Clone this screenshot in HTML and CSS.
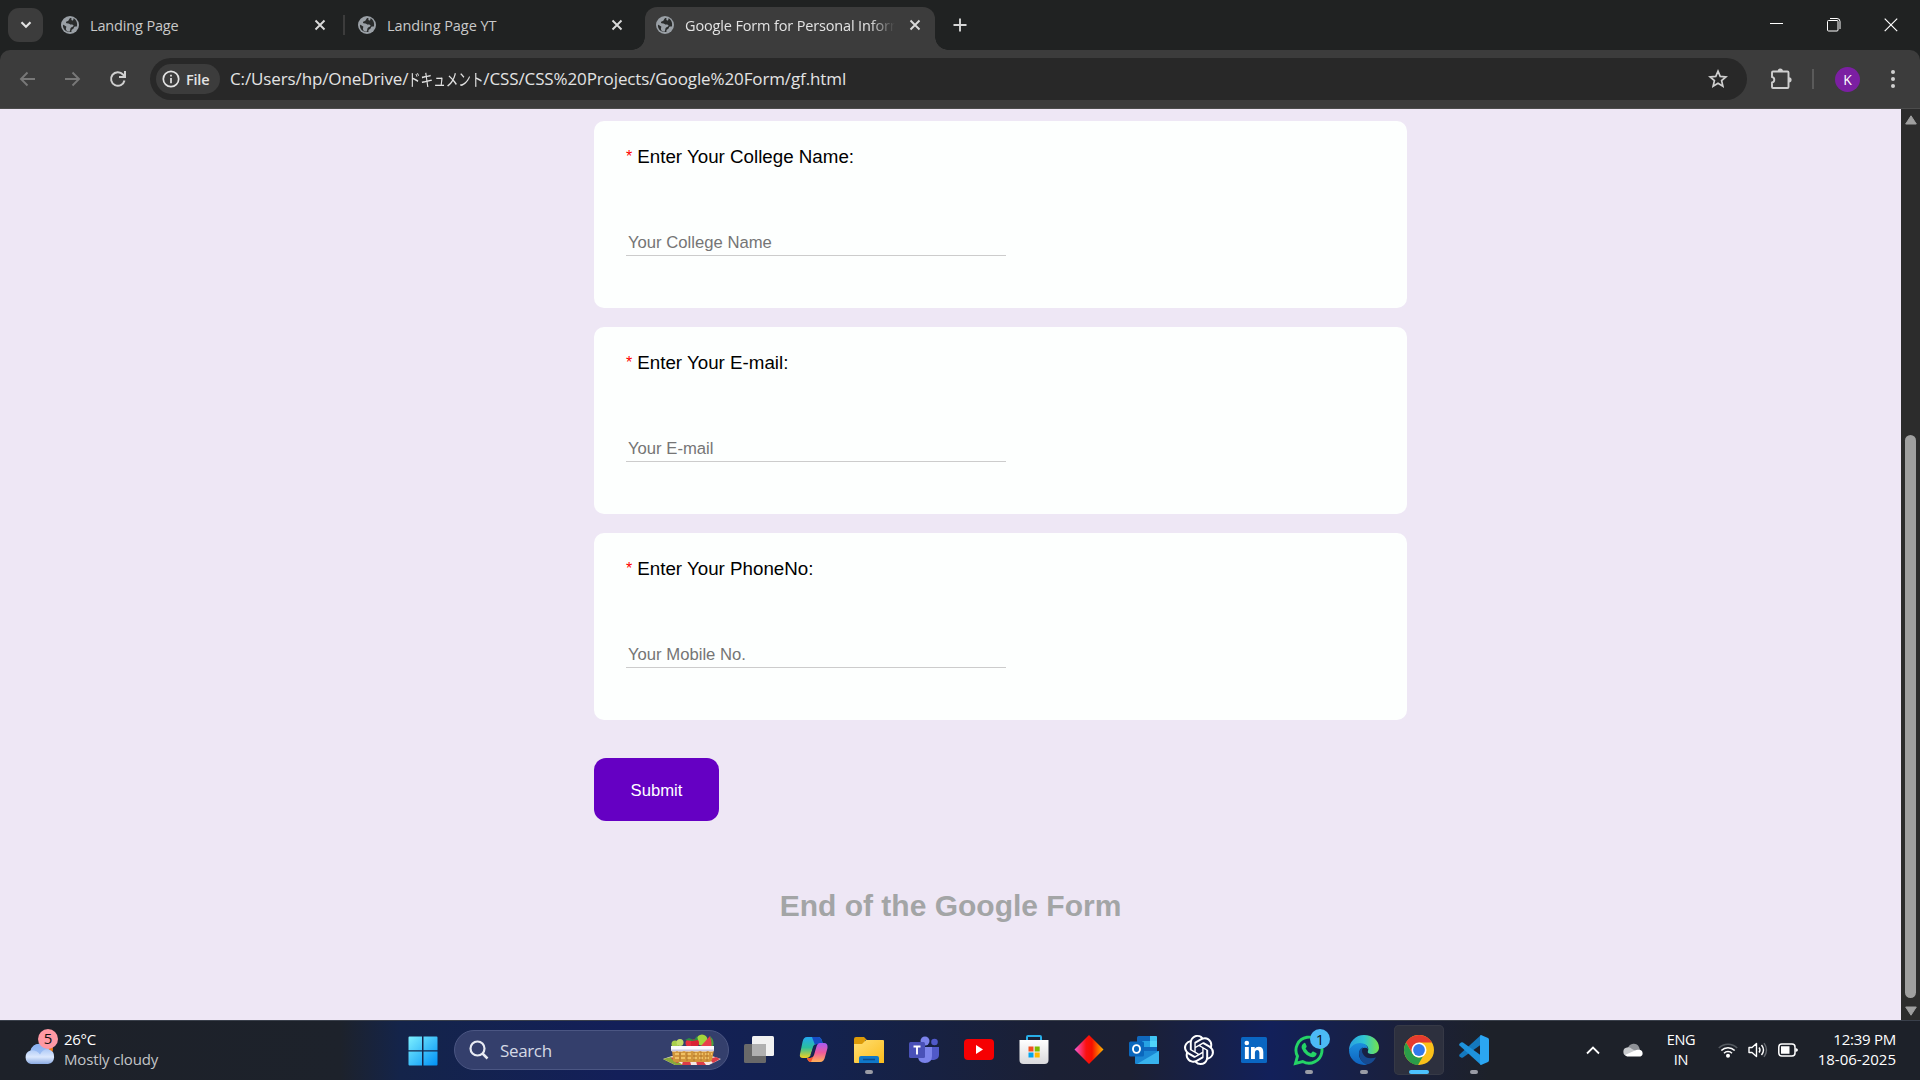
FILE: index.html
```html
<!DOCTYPE html>
<html lang="en">
<head>
<meta charset="utf-8">
<title>Google Form for Personal Information</title>
<link rel="stylesheet" href="styles.css">
</head>
<body>
<svg width="0" height="0" class="defs">
  <defs>
    <symbol id="globe" viewBox="0 0 18 18"><circle cx="9" cy="9" r="9" fill="#9aa0a6"/><path d="M10.500 2C7.500 2 8.700 4 7 5c-1 .6-2.200.4-2 1.700.3 1.200 3.200.5 4 1.500 1 .9 3.600-.2 3.500 1.600-.1 1.500-2.500 1.200-3 2.400-.4 1.100-.2 3-1.200 3.500C4.500 15.500 4.600 12.500 5.300 11.300 5.900 10 3.200 9.800 2 8.500c-.6 4.300 2.600 7.600 7 7.600.8 0 1-.1 1.600-.3-.6-1.400.3-2.200 1.300-2.700 1.300-.6.7-2 1.900-2.500.8-.3 1.600.1 2.200-.4C16.600 6.500 15 3.600 12.500 2.300c0 1.500-.3 2.400-1.200 2.300-.9-.1-1.200-1.500-.8-2.600z" fill="#2a2c2c"/></symbol>
    <symbol id="x" viewBox="0 0 12 12"><path d="M1.500 1.500l9 9M10.500 1.500l-9 9" stroke="currentColor" stroke-width="1.900" fill="none"/></symbol>
    <linearGradient id="win" x1="0" y1="0" x2="1" y2="1"><stop offset="0" stop-color="#7df0ff"/><stop offset="1" stop-color="#0090f5"/></linearGradient>
    <linearGradient id="cloud" x1="0" y1="0" x2="0" y2="1"><stop offset="0" stop-color="#8db4f2"/><stop offset=".65" stop-color="#dce8fd"/><stop offset="1" stop-color="#8aaae2"/></linearGradient>
    <linearGradient id="copA" x1="0" y1="0" x2="0" y2="1"><stop offset="0" stop-color="#24a7f2"/><stop offset=".5" stop-color="#2bbf9d"/><stop offset="1" stop-color="#f3d021"/></linearGradient>
    <linearGradient id="copB" x1="0" y1="0" x2="0" y2="1"><stop offset="0" stop-color="#a75bf5"/><stop offset=".5" stop-color="#ee5a9c"/><stop offset="1" stop-color="#ffb257"/></linearGradient>
    <linearGradient id="fold" x1="0" y1="0" x2="1" y2="1"><stop offset="0" stop-color="#ffdf73"/><stop offset="1" stop-color="#fcbc1c"/></linearGradient>
    <linearGradient id="kite" x1="0" y1="0" x2="1" y2="0"><stop offset="0" stop-color="#f45bd8"/><stop offset=".4" stop-color="#fb1111"/><stop offset=".6" stop-color="#f51000"/><stop offset="1" stop-color="#ffb400"/></linearGradient>
    <linearGradient id="bag" x1="0" y1="0" x2="0" y2="1"><stop offset="0" stop-color="#fff"/><stop offset="1" stop-color="#d9d9dc"/></linearGradient>
    <linearGradient id="edgeA" x1="0" y1="0" x2="1" y2="0"><stop offset="0" stop-color="#2a9fe0"/><stop offset=".5" stop-color="#2fc5d4"/><stop offset="1" stop-color="#75e44a"/></linearGradient>
    <linearGradient id="edgeB" x1="0" y1="0" x2="0" y2="1"><stop offset="0" stop-color="#1b8fdf"/><stop offset="1" stop-color="#0f62bd"/></linearGradient>
  </defs>
</svg>

<header class="tabstrip">
  <div class="tab-search"><svg width="12" height="8" viewBox="0 0 12 8"><path d="M1.500 1.200L6 5.800l4.500-4.600" fill="none" stroke="#e3e3e3" stroke-width="2.100"/></svg></div>
  <div class="tab first"><svg class="globe"><use href="#globe"/></svg><span class="title">Landing Page</span><svg class="x"><use href="#x"/></svg></div>
  <i class="divider"></i>
  <div class="tab second"><svg class="globe"><use href="#globe"/></svg><span class="title yt">Landing Page YT</span><svg class="x"><use href="#x"/></svg></div>
  <div class="tab active"><svg class="globe"><use href="#globe"/></svg><span class="title fade">Google Form for Personal Information</span><svg class="x"><use href="#x"/></svg></div>
  <svg class="plus" width="14" height="14" viewBox="0 0 14 14"><path d="M7 .5v13M.5 7h13" stroke="#d5d5d5" stroke-width="1.900"/></svg>
  <div class="winctl">
    <svg width="14" height="14" viewBox="0 0 14 14"><path d="M0 5.500h13" stroke="#fff"/></svg>
    <svg width="14" height="14" viewBox="0 0 14 14" fill="none" stroke="#fff"><path d="M3 .5h7a3 3 0 0 1 3 3V11"/><rect x=".5" y="2.500" width="10.500" height="10.500" rx="1"/></svg>
    <svg width="14" height="14" viewBox="0 0 14 14"><path d="M.7.7l12.500 12.500M13.200.7L.7 13.200" stroke="#fff" stroke-width="1.200"/></svg>
  </div>
</header>

<div class="toolbar">
  <svg class="nav back" width="18" height="16" viewBox="0 0 18 16"><path d="M16 8H2.500M8.500 1.500L2 8l6.500 6.500" fill="none" stroke="#787878" stroke-width="1.900"/></svg>
  <svg class="nav fwd" width="18" height="16" viewBox="0 0 18 16"><path d="M1 8h13.500M8.500 1.500L15 8l-6.500 6.500" fill="none" stroke="#787878" stroke-width="1.900"/></svg>
  <svg class="nav" width="18" height="18" viewBox="0 0 18 18"><path d="M15.500 10.500A6.800 6.800 0 1 1 14 4.500L16 6.500" fill="none" stroke="#d0d0d0" stroke-width="2"/><path d="M16 1v6h-6" fill="none" stroke="#d0d0d0" stroke-width="2"/></svg>
  <div class="omnibox">
    <div class="chip"><svg width="18" height="18" viewBox="0 0 18 18"><circle cx="9" cy="9" r="7.700" fill="none" stroke="#e3e3e3" stroke-width="1.700"/><path d="M9 8v5.200M9 4.700v1.900" stroke="#e3e3e3" stroke-width="1.700"/></svg><span>File</span></div>
    <span class="url">C:/Users/hp/OneDrive/<span class="jp">ドキュメント</span>/CSS/CSS%20Projects/Google%20Form/gf.html</span>
    <svg class="star" width="20" height="20" viewBox="0 0 20 20"><path d="M10 2.200l2.200 5.200 5.700.5-4.300 3.700 1.300 5.600L10 14.200l-4.900 3 1.300-5.600L2.100 7.900l5.700-.5z" fill="none" stroke="#cfcfcf" stroke-width="1.700"/></svg>
  </div>
  <svg class="puzzle" width="22" height="22" viewBox="0 0 22 22"><path d="M2 4.500Q2 3.500 3 3.500h14.500q1 0 1 1V19q0 1-1 1H3q-1 0-1-1v-4.500a2.800 2.800 0 0 0 0-5.500z" fill="none" stroke="#cfcfcf" stroke-width="1.900" stroke-linejoin="round"/><path d="M7.700 3a2.600 2.600 0 0 1 5.200 0zM19 9.200a2.600 2.600 0 0 1 0 5.200z" fill="#cfcfcf"/></svg>
  <i class="bar"></i>
  <span class="avatar">K</span>
  <svg class="dots" width="6" height="20" viewBox="0 0 6 20" fill="#d0d0d0"><circle cx="3" cy="3" r="2"/><circle cx="3" cy="10" r="2"/><circle cx="3" cy="17" r="2"/></svg>
</div>

<div class="viewport">
  <main>
    <form class="cards">
      <section class="card"><label><b>*</b>Enter Your College Name:</label><input type="text" placeholder="Your College Name"></section>
      <section class="card"><label><b>*</b>Enter Your E-mail:</label><input type="text" placeholder="Your E-mail"></section>
      <section class="card"><label><b>*</b>Enter Your PhoneNo:</label><input type="text" placeholder="Your Mobile No."></section>
      <button type="button" class="submit">Submit</button>
    </form>
    <h1>End of the Google Form</h1>
  </main>
  <div class="scroll">
    <svg width="12" height="10" viewBox="0 0 12 10"><path d="M6 .8L11.300 9H.7z" fill="#9f9f9f" stroke="#9f9f9f" stroke-linejoin="round"/></svg>
    <i class="thumb"></i>
    <svg width="12" height="10" viewBox="0 0 12 10"><path d="M6 9.200L11.300 1H.7z" fill="#9f9f9f" stroke="#9f9f9f" stroke-linejoin="round"/></svg>
  </div>
</div>

<footer class="taskbar">
  <div class="weather">
    <svg width="36" height="38" viewBox="0 0 36 38"><circle cx="22" cy="20" r="7" fill="#f47a12"/><path d="M7 35a7 7 0 0 1-.5-13.500A10 10 0 0 1 25 20.500 7.500 7.500 0 0 1 24 35z" fill="url(#cloud)"/><path d="M6.500 21.500A10 10 0 0 1 25 20.500q-6-1-9 5-4-5-9.500-4z" fill="#86adf0" opacity=".65"/><circle cx="24" cy="10" r="10" fill="#ff99a4"/><text x="24" y="15" text-anchor="middle" class="badge">5</text></svg>
    <div class="wtext"><span class="temp">26°C</span><span class="sky">Mostly cloudy</span></div>
  </div>
  <svg class="start" width="30" height="30" viewBox="0 0 30 30"><path d="M1.500.5H14v13.700H.5V1.500q0-1 1-1zM15.500.5h13q1 0 1 1v12.700h-14zM.5 15.500H14v14H1.500q-1 0-1-1zM15.500 15.500h14v13q0 1-1 1h-13z" fill="url(#win)"/></svg>
  <div class="search">
    <svg width="20" height="20" viewBox="0 0 20 20"><circle cx="8.500" cy="8.500" r="7" fill="none" stroke="#e8ebf3" stroke-width="2.200"/><path d="M13.500 13.500l5 5" stroke="#e8ebf3" stroke-width="2.500"/></svg>
    <span>Search</span>
    <svg class="basket" width="58" height="32" viewBox="0 0 58 32">
      <path d="M0 25l9-3h40l9 3-12 6H12z" fill="#f6e8e4"/><path d="M0 25l8-2 12 8h-8z" fill="#8aa83a"/><path d="M8 24l6-2 5 4-5 3zM20 27h7l1 4h-9zM33 27h7l3 4h-9zM46 25l7-2 4 2-7 4z" fill="#dc3c48"/>
      <circle cx="12" cy="10" r="3.500" fill="#a9cf4d"/><circle cx="17" cy="8.500" r="3.500" fill="#c2dd6a"/><circle cx="39" cy="6" r="5.500" fill="#a4d63c"/><path d="M38 12L47 2l3 10z" fill="#e8404c"/><path d="M47 2q5 5 3 10h-1.500q.5-5-1.500-10z" fill="#4ca53c"/><circle cx="26" cy="9" r="3.500" fill="#e62f3f"/><circle cx="32" cy="9" r="4" fill="#d92336"/><path d="M22 6l4-2 5 2 3-4 1 4-6 1z" fill="#2f8c45"/>
      <path d="M9 16h42l-2 10q-1 2-3 2H13q-3 0-3-2z" fill="#d1953c"/><path d="M12 20h37M12 24h36" stroke="#f0c164" stroke-width="1.800" stroke-dasharray="4 2"/><path d="M17 17v10M24 17v10M31 17v10M38 17v10M44 17v10" stroke="#a8702c" stroke-width=".8"/><path d="M8 12h43v5q-3 1-6 0-4 1-8 0-4 1-8 0-4 1-8 0-4 1-7 0-3 1-6 0z" fill="#fafaff"/><path d="M8 15.500h43v1.500H8z" fill="#c9c8e3"/>
    </svg>
  </div>
  <div class="apps">
    <div class="app"><svg width="32" height="32" viewBox="0 0 32 32"><rect x="1" y="10" width="22" height="19" rx="1.500" fill="#696969"/><rect x="9" y="2" width="22" height="20" rx="1.500" fill="#f1f1f1"/><path d="M9 10h14v12H9z" fill="#b0b0b0"/></svg></div>
    <div class="app"><svg width="32" height="32" viewBox="0 0 32 32"><path d="M9 3h11q3 0 4 4l1 3h-6q-3 0-4 3l-2 7q-1 4-5 4H5q-4 0-3-4L4.500 8q1-5 4.500-5z" fill="url(#copA)"/><path d="M14 3h6q3 0 4 4l1 3h-6q-1 0-2 1z" fill="#164cc4"/><path d="M22 28H13q-3 0-4-4h3q3 0 4-3l2.500-8.500Q19.500 9 22 9h4q4 0 3.500 5L27 23q-1 5-5 5z" fill="url(#copB)"/><path d="M9 24h3q3 0 4-3l-3 7q-3 0-4-4z" fill="#f5542e"/><path d="M18 11.500L14.500 21h-2l3.500-9.500z" fill="#182656"/></svg></div>
    <div class="app run"><svg width="32" height="32" viewBox="0 0 32 32"><path d="M1 5q0-2 2-2h8l3 3h-2v5H1z" fill="#dc9a08"/><path d="M1 10h8l4-4h17q1 0 1 1v22H2q-1 0-1-1z" fill="url(#fold)"/><path d="M6 29v-5q0-2 2-2h16q2 0 2 2v5z" fill="#0f78c9"/><path d="M10 25.500h12" stroke="#0b4b8d" stroke-width="1.500"/></svg></div>
    <div class="app"><svg width="32" height="32" viewBox="0 0 32 32"><circle cx="26.500" cy="8" r="3.300" fill="#5059c9"/><path d="M22 13h9v8q0 4-5 5h-4z" fill="#5059c9"/><circle cx="17" cy="7" r="4.500" fill="#7b83eb"/><path d="M10 13h14v9q0 7-7 7t-7-7z" fill="#7b83eb"/><rect x="1" y="8" width="16" height="16" rx="1.500" fill="#4951b8"/><path d="M5.500 12.500h7M9 12.500v8" stroke="#fff" stroke-width="1.900"/></svg></div>
    <div class="app"><svg width="32" height="32" viewBox="0 0 32 32"><rect x="1" y="5" width="30" height="21" rx="4" fill="#f60002"/><path d="M13 11l7 4.500-7 4.500z" fill="#fff"/></svg></div>
    <div class="app"><svg width="32" height="32" viewBox="0 0 32 32"><path d="M9 8V3q0-1 1-1h12q1 0 1 1v5" fill="none" stroke="#28aee8" stroke-width="2"/><path d="M1.500 6h29v20q0 4-4 4h-21q-4 0-4-4z" fill="url(#bag)"/><path d="M10.500 12.500h5v5h-5z" fill="#f25022"/><path d="M16.700 12.500h5v5h-5z" fill="#7fba00"/><path d="M10.500 18.500h5v5h-5z" fill="#00a4ef"/><path d="M16.700 18.500h5v5h-5z" fill="#ffb900"/></svg></div>
    <div class="app"><svg width="32" height="32" viewBox="0 0 32 32"><path d="M16 1L30.500 15.500 16 30 1.500 15.500z" fill="url(#kite)"/></svg></div>
    <div class="app"><svg width="32" height="32" viewBox="0 0 32 32"><rect x="9" y="2" width="20" height="16" rx="1.500" fill="#1068bd"/><path d="M14 7h8v6h-8z" fill="#27a3e4"/><path d="M22 2h6q1 0 1 1v4h-7z" fill="#41c5f4"/><path d="M22 7h7v6h-7z" fill="#4fd5fb"/><path d="M7 17h24v12q0 1-1 1H8q-1 0-1-1z" fill="#1a86d3"/><path d="M31 17v12q0 1-1 1H9z" fill="#38b3ee"/><rect x="1" y="7.500" width="15" height="15" rx="1.500" fill="#0a67bd"/><ellipse cx="8.500" cy="15" rx="3.500" ry="3.900" fill="none" stroke="#fff" stroke-width="1.900"/></svg></div>
    <div class="app"><svg width="32" height="32" viewBox="0 0 24 24"><path fill="#fff" transform="translate(.7 .7) scale(.94)" d="M22.282 9.821a5.985 5.985 0 0 0-.516-4.910 6.046 6.046 0 0 0-6.510-2.900A6.065 6.065 0 0 0 4.981 4.182a5.985 5.985 0 0 0-3.998 2.900 6.046 6.046 0 0 0 .743 7.097 5.980 5.980 0 0 0 .510 4.911 6.051 6.051 0 0 0 6.515 2.900A5.985 5.985 0 0 0 13.260 24a6.056 6.056 0 0 0 5.772-4.206 5.990 5.990 0 0 0 3.998-2.900 6.056 6.056 0 0 0-.748-7.073zM13.260 22.430a4.476 4.476 0 0 1-2.876-1.040l.141-.081 4.779-2.758a.795.795 0 0 0 .393-.681v-6.737l2.020 1.168a.071.071 0 0 1 .038.052v5.583a4.504 4.504 0 0 1-4.495 4.494zM3.600 18.304a4.470 4.470 0 0 1-.535-3.014l.142.085 4.783 2.759a.771.771 0 0 0 .780 0l5.843-3.369v2.332a.080.080 0 0 1-.033.062L9.740 19.950a4.500 4.500 0 0 1-6.140-1.646zM2.340 7.896a4.485 4.485 0 0 1 2.366-1.973V11.600a.766.766 0 0 0 .388.677l5.815 3.354-2.020 1.169a.076.076 0 0 1-.071 0l-4.830-2.787A4.504 4.504 0 0 1 2.340 7.872zm16.597 3.855l-5.833-3.387L15.119 7.200a.076.076 0 0 1 .071 0l4.830 2.791a4.494 4.494 0 0 1-.676 8.105v-5.678a.790.790 0 0 0-.407-.667zm2.010-3.023l-.141-.085-4.774-2.782a.776.776 0 0 0-.785 0L9.409 9.230V6.897a.066.066 0 0 1 .028-.061l4.830-2.787a4.500 4.500 0 0 1 6.680 4.660zm-12.640 4.135l-2.020-1.164a.080.080 0 0 1-.038-.057V6.075a4.500 4.500 0 0 1 7.375-3.453l-.142.080L8.704 5.460a.795.795 0 0 0-.393.681zm1.097-2.365l2.602-1.500 2.607 1.500v2.999l-2.597 1.500-2.607-1.500z"/></svg></div>
    <div class="app"><svg width="32" height="32" viewBox="0 0 32 32"><rect x="3" y="3" width="26" height="26" rx="1.500" fill="#0a66c2"/><circle cx="8.800" cy="9" r="2.300" fill="#fff"/><path d="M6.900 13h3.900v12H6.900zM13 13h3.700v1.700q1.200-2 4-2 4.600 0 4.600 5.300v7h-3.900v-6.300q0-2.700-2-2.700-2.500 0-2.500 3v6H13z" fill="#fff"/></svg></div>
    <div class="app run wa"><svg width="32" height="32" viewBox="0 0 32 32"><path d="M2.500 29.500l2-7.300A13 13 0 1 1 9.700 27.500z" fill="none" stroke="#25d366" stroke-width="2.900"/><path d="M11.200 9q.8-.5 1.300.5l1.100 2.600q.3.600-.2 1.200l-.9 1.100q2 3.700 5.500 5l1.300-1.600q.4-.5 1-.2l2.900 1.400q.6.300.4 1-.7 3-4 3.200-2 0-5.800-2.300-4-3-5.100-6.600Q8 11 11.200 9z" fill="#25d366"/></svg><span class="count">1</span></div>
    <div class="app run"><svg width="32" height="32" viewBox="0 0 32 32"><path d="M1 16A15 15 0 0 1 16 1c9 0 15 6 15 12.500 0 4-3.200 6.500-7 6.500-3 0-5-1.200-4-3 1.500-4-2-7-6-7-6 0-10 3-13 6z" fill="url(#edgeA)"/><path d="M1 16q4-7 11-7 7 0 8 6-2-2-5-1-5 2-4 8 2 6 8 8.500Q17 31 16 31A15 15 0 0 1 1 16z" fill="url(#edgeB)"/><path d="M11 19q0-4 4-6-2 4 0 7 3 6 13 3.500-4 7-10 7-7-4-7-11.500z" fill="#164a91"/></svg></div>
    <div class="app run on"><svg width="32" height="32" viewBox="0 0 32 32"><circle cx="16" cy="16" r="15" fill="#fbc11a"/><path d="M3 8.500A15 15 0 0 1 29 8.500H16L9.500 19.700z" fill="#e63b2e"/><path d="M3 8.500l6.500 11.200A7.500 7.500 0 0 0 20 22.300L15 31A15 15 0 0 1 3 8.500z" fill="#2b9d49"/><circle cx="16" cy="16" r="7.500" fill="#fff"/><circle cx="16" cy="16" r="5.900" fill="#3279ea"/></svg></div>
    <div class="app run"><svg width="32" height="32" viewBox="0 0 32 32"><path d="M1.500 20.500L23 1l1.500 8.500L5 23.500q-1 .7-2 0L1.500 22.200q-.8-.8 0-1.700z" fill="#1478bd"/><path d="M1.500 11.500L23 31l1.500-8.500L5 8.500q-1-.7-2 0L1.500 9.800q-.8.8 0 1.700z" fill="#1e93dd"/><path d="M23 1l7 3q1 .5 1 2v20q0 1.500-1 2l-7 3q-1 0-1-2V3q0-2 1-2z" fill="#2ba6f2"/></svg></div>
  </div>
  <div class="tray">
    <svg class="chev" width="14" height="9" viewBox="0 0 14 9"><path d="M1 7.500l6-6 6 6" fill="none" stroke="#fff" stroke-width="1.800"/></svg>
    <svg class="one" width="21" height="14" viewBox="0 0 21 14"><path d="M5 5a6 6 0 0 1 11-1l1 3-8 3z" fill="#8e9196"/><path d="M4 13A4.300 4.300 0 0 1 4 4.500q3-.7 5 1.500l10 5-4 2z" fill="#c8cacd"/><path d="M2 12l10-4.500a5 5 0 0 1 4-.7 3.500 3.500 0 0 1 1.500 6.700H4z" fill="#fff"/></svg>
    <div class="lang"><span>ENG</span><span>IN</span></div>
    <svg class="wifi" width="20" height="16" viewBox="0 0 20 16" fill="none" stroke="#fff" stroke-width="1.600"><path d="M.8 6a13 13 0 0 1 18.400 0" stroke="#555a60"/><path d="M3.300 8.500a9.500 9.500 0 0 1 13.400 0M6 11.200a5.700 5.700 0 0 1 8 0"/><circle cx="10" cy="13.700" r="1.200" fill="#fff"/></svg>
    <svg class="vol" width="20" height="16" viewBox="0 0 20 16" fill="none" stroke="#fff" stroke-width="1.400"><path d="M1 5.500h3l4.500-4v13L4 10.500H1z" stroke-linejoin="round"/><path d="M11 5.500q2 2.500 0 5M13.500 3q4 5 0 10"/><path d="M16 1.200q5 6.800 0 13.600" stroke="#666a70"/></svg>
    <svg class="bat" width="20" height="14" viewBox="0 0 20 14"><rect x=".8" y="1" width="16.200" height="12" rx="3" fill="none" stroke="#fff" stroke-width="1.500"/><path d="M3 3.300h8.500v7.400H3zM17.500 5q2.500.3 2.500 2t-2.500 2z" fill="#fff"/></svg>
    <div class="clock"><span class="time">12:39 PM</span><span class="date">18-06-2025</span></div>
  </div>
</footer>
</body>
</html>
```
FILE: styles.css
```css
* { box-sizing: border-box; }
body { margin: 0; width: 1920px; height: 1080px; overflow: hidden; display: flex; flex-direction: column; background: #202222; font-family: "Open Sans", "Noto Sans", "Noto Sans CJK JP", sans-serif; }
svg { display: block; flex: none; }
.defs { position: absolute; }

/* Tab strip */
.tabstrip { height: 50px; flex: none; display: flex; align-items: center; padding-left: 8px; color: #c9c9c9; }
.tab-search { width: 35px; height: 34px; border-radius: 11px; background: #3c3c3c; display: flex; align-items: center; justify-content: center; }
.tab { display: flex; align-items: center; height: 43px; align-self: flex-end; padding-bottom: 7px; font-size: 14.500px; }
.globe { width: 18px; height: 18px; margin-right: 11px; }
.title { flex: 1; white-space: nowrap; overflow: hidden; letter-spacing: -.15px; line-height: 24px; padding-top: 2px; }
.yt { letter-spacing: -.05px; }
.x { width: 12px; height: 12px; color: #dadada; }
.first { width: 265px; margin-left: 18px; }
.divider { width: 2px; height: 20px; background: #3c3c3c; margin: 0 13px 0 17px; }
.second { width: 265px; margin-right: 22px; }
.active { width: 290px; background: #3c3c3c; border-radius: 12px 12px 0 0; padding: 0 14px 7px 11px; color: #e3e3e3; position: relative; }
.active::before, .active::after { content: ""; position: absolute; bottom: 0; width: 13px; height: 13px; }
.active::before { left: -13px; background: radial-gradient(circle at 0 0, transparent 12.500px, #3c3c3c 13px); }
.active::after { right: -13px; background: radial-gradient(circle at 100% 0, transparent 12.500px, #3c3c3c 13px); }
.fade { margin-right: 14px; -webkit-mask-image: linear-gradient(90deg, #000 88%, transparent); mask-image: linear-gradient(90deg, #000 88%, transparent); }
.plus { margin-left: 18px; }
.winctl { margin-left: auto; display: flex; gap: 43px; padding-right: 22px; }

/* Address bar */
.toolbar { height: 59px; flex: none; background: #3c3c3c; border-radius: 10px 10px 0 0; border-bottom: 1px solid #4c4c4c; display: flex; align-items: center; padding: 0 24px 0 19px; }
.nav { margin-right: 23px; }
.back { margin-right: 27px; }
.fwd { margin-right: 27px; }
.omnibox { height: 42px; width: 1597px; border-radius: 21px; background: #282828; display: flex; align-items: center; padding: 0 19px 0 6px; }
.nav:nth-child(3) { margin-right: 23px; }
.chip { height: 30px; width: 64px; border-radius: 15px; background: #3c3c3c; display: flex; align-items: center; gap: 6px; padding-left: 6px; color: #e3e3e3; font-size: 14.500px; font-weight: 600; letter-spacing: -.2px; }
.url { margin-left: 10px; font-size: 17px; line-height: 24px; letter-spacing: -.12px; color: #e3e3e3; white-space: nowrap; }
.jp { display: inline-block; width: 75px; height: 24px; line-height: 24px; vertical-align: top; font-family: "Noto Sans CJK JP", sans-serif; font-size: 17px; letter-spacing: 0; transform: scaleX(.74); transform-origin: left; }
.star { margin-left: auto; }
.puzzle { margin-left: 23px; }
.bar { width: 2px; height: 20px; background: #5a5a5a; margin: 0 21px 0 20px; }
.avatar { width: 25px; height: 25px; border-radius: 50%; background: #7b1fa2; color: #fff; font-size: 14px; line-height: 25px; text-align: center; }
.dots { margin-left: auto; }

/* Page */
.viewport { height: 911px; flex: none; display: flex; font-family: "Liberation Sans", Arial, sans-serif; }
main { flex: 1; background: #eee7f5; padding-top: 12px; }
.cards { width: 813px; margin-left: 594px; display: flex; flex-direction: column; align-items: flex-start; gap: 19px; }
.card { width: 100%; height: 187px; border-radius: 10px; background: #fdfffe; padding: 24px 32px; display: flex; flex-direction: column; align-items: flex-start; }
.card label { font-size: 18.750px; line-height: 23px; height: 23px; color: #000; }
.card label b { font-weight: 400; font-size: 16px; color: #f00; margin-right: 5px; vertical-align: 1px; }
.card input { margin-top: 61px; width: 380px; height: 27px; border: 0; border-bottom: 1px solid #ccc; background: transparent; padding: 2px 2px 0; font: 16.670px "Liberation Sans", Arial, sans-serif; }
.card input::placeholder { color: #757575; }
.submit { margin-top: 19px; width: 125px; height: 63px; border: 0; border-radius: 12px; background: #6500c3; color: #fff; padding: 2px 0 0; font: 16.670px "Liberation Sans", Arial, sans-serif; }
h1 { margin: 67px 0 0; font-size: 30px; line-height: 36px; text-align: center; color: #a3a5a6; }
.scroll { width: 19px; background: #2c2c2c; display: flex; flex-direction: column; align-items: center; padding: 6px 0 4px; }
.thumb { width: 11px; height: 563px; margin: auto 0 8px; border-radius: 6px; background: #9f9f9f; }

/* Taskbar */
.taskbar { height: 60px; flex: none; display: flex; border-top: 1px solid #3a404b; background: linear-gradient(90deg, #1d2129 0, #1d222b 340px, #14244a 400px, #131f59 620px, #13224f 820px, #1b2034 1050px, #1c2033 1130px, #12205a 1270px, #1a203c 1400px, #1d2129 1490px); font-family: "Open Sans", "Noto Sans", sans-serif; align-items: center; padding-bottom: 1px; }
.weather { display: flex; width: 408px; flex: none; padding-left: 24px; }
.weather svg { margin-top: -2px; }
.badge { font: 15px "Open Sans", sans-serif; fill: #111; }
.wtext { display: flex; flex-direction: column; margin: -2px 0 0 4px; font-size: 15px; line-height: 20px; color: #fff; letter-spacing: -.3px; }
.sky { color: #c3c5c8; letter-spacing: -.15px; }
.start { margin-top: 1px; }
.search { width: 275px; height: 40px; margin-left: 16px; border-radius: 20px; background: #343f6c; border: 1px solid #4b5683; display: flex; align-items: center; padding: 0 7px 0 14px; color: #d5d9e5; font-size: 17px; letter-spacing: -.35px; }
.search span { margin-left: 11px; }
.basket { margin-left: auto; }
.apps { display: flex; margin-left: 5px; gap: 5px; }
.app { width: 50px; height: 50px; display: flex; align-items: center; justify-content: center; position: relative; border-radius: 5px; }
.run::after { content: ""; position: absolute; bottom: 1px; left: 21px; width: 8px; height: 4px; border-radius: 2px; background: #9a9ca6; }
.on { background: #2d303e; box-shadow: inset 0 0 0 1px #363946; }
.on::after { left: 15px; width: 20px; background: #4cc2ff; }
.count { position: absolute; left: 26px; top: 4px; width: 20px; height: 20px; border-radius: 50%; background: #4cb9f5; color: #111; font-size: 15px; line-height: 20px; text-align: center; }
.tray { margin-left: auto; display: flex; align-items: center; padding-right: 24px; color: #fff; font-size: 15px; line-height: 20px; }
.one { margin-left: 23px; }
.lang { width: 32px; margin: 0 0 0 21px; display: flex; flex-direction: column; align-items: center; letter-spacing: -.3px; font-size: 14.500px; }
.wifi { margin-left: 21px; }
.vol { margin-left: 10px; }
.bat { margin-left: 10px; }
.clock { width: 79px; margin: -2px 0 0 19px; display: flex; flex-direction: column; align-items: flex-end; white-space: nowrap; letter-spacing: -.25px; }
.date { letter-spacing: 0; }
```
